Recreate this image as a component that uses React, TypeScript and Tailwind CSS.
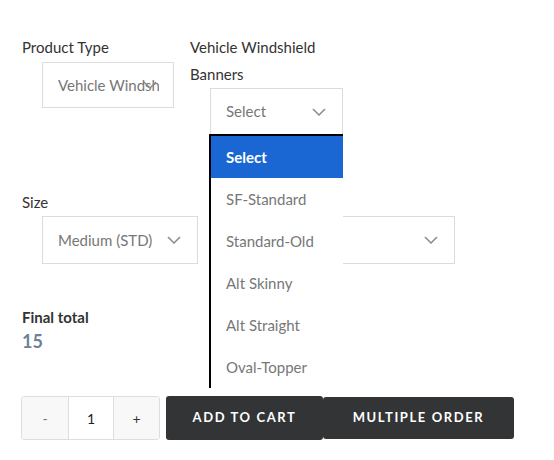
import React from "react";

function Chevron() {
  return (
    <svg width="14" height="8" viewBox="0 0 14 8" fill="none" className="shrink-0">
      <path d="M1 1l6 6 6-6" stroke="#8a8a8a" strokeWidth="1.5" />
    </svg>
  );
}

function SelectBox({ value, className }: { value: string; className: string }) {
  return (
    <div className={`relative flex items-center border border-[#dcdcdc] bg-white pl-[15px] text-[15px] text-[#777] ${className}`}>
      <span className="overflow-hidden whitespace-nowrap">{value}</span>
      <span className="absolute right-[16px] top-1/2 -translate-y-1/2">
        <Chevron />
      </span>
    </div>
  );
}

const options = ["Select", "SF-Standard", "Standard-Old", "Alt Skinny", "Alt Straight", "Oval-Topper"];

export default function App() {
  return (
    <div className="relative h-[460px] w-[554px] bg-white pl-[22px] pt-[34px] font-['Lato','Liberation_Sans',sans-serif] text-[#333]">
      <div className="flex">
        <div className="w-[168px]">
          <div className="text-[15px] leading-[27px]">Product Type</div>
          <SelectBox value="Vehicle Windshield Banners" className="ml-5 mt-px h-[46px] w-[132px] pr-[14px]" />
        </div>
        <div>
          <div className="w-[140px] text-[15px] leading-[27px]">Vehicle Windshield Banners</div>
          <SelectBox value="Select" className="ml-5 h-[47px] w-[133px]" />
        </div>
      </div>

      <div className="mt-[54px] flex">
        <div className="w-[188px]">
          <div className="text-[15px] leading-[27px]">Size</div>
          <SelectBox value="Medium (STD)" className="ml-5 h-[48px] w-[156px]" />
        </div>
        <div>
          <div className="h-[27px]" />
          <SelectBox value="" className="h-[48px] w-[245px]" />
        </div>
      </div>

      <div className="mt-[41px] text-[15px] font-bold leading-[24px]">Final total</div>
      <div className="text-[18px] font-bold leading-[24px] text-[#6b8299]">15</div>

      <div className="mt-[43px] flex items-center">
        <div className="-ml-px flex h-[44px] overflow-hidden rounded-[3px] border border-[#dedede] text-[14px]">
          <button className="w-[46px] bg-[#f8f8f8] text-[#777]">-</button>
          <div className="flex w-[46px] items-center justify-center border-x border-[#dedede] bg-white text-[#222]">1</div>
          <button className="w-[45px] bg-[#f8f8f8] text-[#333]">+</button>
        </div>
        <button className="ml-[6px] h-[44px] w-[157px] rounded-[3px] bg-[#333436] text-[13px] font-bold tracking-[1.6px] text-white">
          ADD TO CART
        </button>
        <button className="h-[42px] w-[191px] rounded-[3px] bg-[#333436] text-[13px] font-bold tracking-[1.6px] text-white">
          MULTIPLE ORDER
        </button>
      </div>

      <ul className="absolute left-[209px] top-[134px] w-[134px] border-l-2 border-t-2 border-black bg-white text-[15px]">
        {options.map((o, i) => (
          <li
            key={o}
            className={`flex h-[42px] items-center pl-[15px] ${i === 0 ? "bg-[#1a67d3] font-bold text-white" : "text-[#777]"}`}
          >
            {o}
          </li>
        ))}
      </ul>
    </div>
  );
}
